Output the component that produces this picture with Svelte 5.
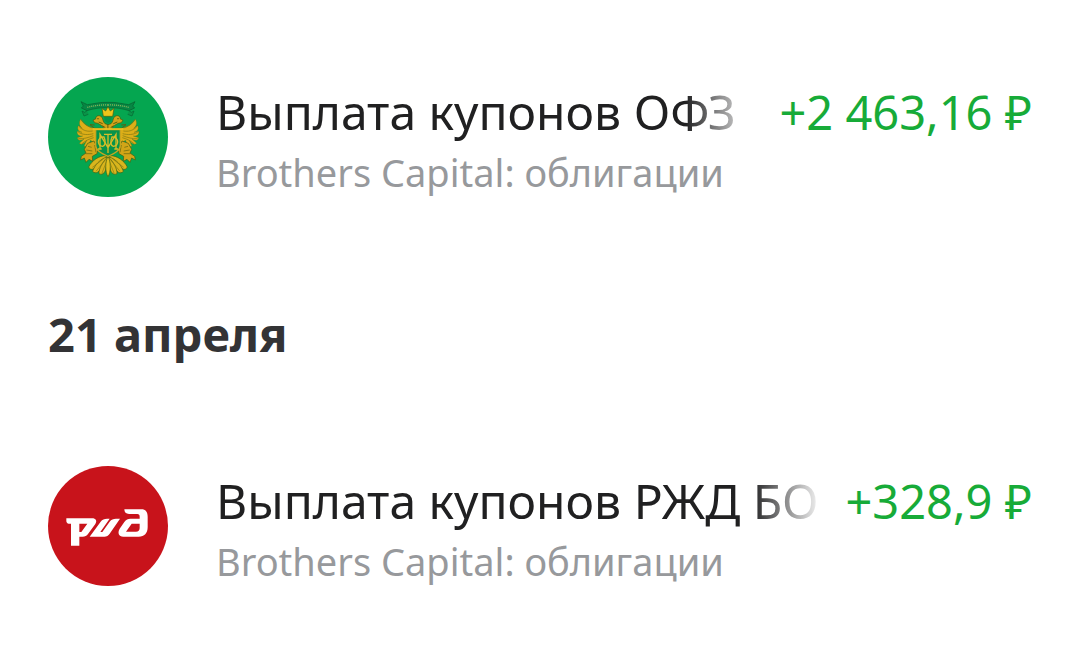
<script>
  const groups = [
    {
      date: null,
      items: [
        { logo: 'treasury', title: 'Выплата купонов ОФЗ', account: 'Brothers Capital: облигации', amount: '+2 463,16 ₽' }
      ]
    },
    {
      date: '21 апреля',
      items: [
        { logo: 'railways', title: 'Выплата купонов РЖД БО', account: 'Brothers Capital: облигации', amount: '+328,9 ₽' }
      ]
    }
  ];
</script>

{#snippet crestHalf()}
  <!-- ribbon -->
  <path d="M204 96C180 95 158 101 142 103L123 94L130 107L124 113L141 121C160 115 182 111 204 112" fill="#078744" stroke="#075f2e" stroke-width="2" />
  <path d="M141 121L134 126L126 122L132 137L145 132" fill="#0a9448" stroke="#086534" stroke-width="2" />
  <path d="M142 111C162 106 182 103 204 104" fill="none" stroke="#91b65b" stroke-width="4" stroke-dasharray="3 3" />
  <!-- wing -->
  <g stroke="#6b6a10" stroke-width="1" fill="#dcae18">
    <path d="M162 174C145 171 130 161 122 147C115 158 119 168 127 174L115 166C110 177 117 184 126 186L112 183C109 193 118 198 128 197L112 202C114 212 124 211 132 206L118 219C127 226 136 217 140 210L132 228C144 230 149 218 151 210L166 218L172 178Z" />
    <path d="M124 148C132 160 142 168 155 172M118 170C132 182 142 184 158 182M115 186C130 194 144 194 160 190M115 205C132 206 144 202 160 196M125 221C138 210 147 206 161 202" fill="none" stroke="#7d7512" stroke-width="2" />
  </g>
  <!-- head and neck -->
  <path d="M194 180C189 164 180 164 174 159L164 157L159 149L167 146C166 136 179 132 186 141C190 148 188 153 195 160L204 163V180Z" fill="#d4a419" stroke="#4a570e" stroke-width="2" />
  <path d="M176 155L188 160M187 166L196 172M164 164L150 163L164 174L183 174" fill="none" stroke="#605d0d" stroke-width="3" />
  <circle cx="174" cy="145" r="2" fill="#394d0c" />
  <!-- leg and claw -->
  <path d="M162 212L143 219L133 237L138 248L124 258L122 269L133 263L138 276L147 267L158 273L157 258L171 250L174 236Z" fill="#d2a518" stroke="#465b10" stroke-width="2" />
  <path d="M144 228L155 231M139 239L157 242M137 250L157 250M164 224L168 246" fill="none" stroke="#5f650f" stroke-width="2" />
  <!-- tail -->
  <g fill="#d9b51d" stroke="#455d10" stroke-width="2">
    <path d="M198 256C178 255 155 271 146 290C150 301 163 298 167 289L200 266Z" />
    <path d="M200 260C181 266 163 285 158 303C167 313 179 304 182 293L202 269Z" />
    <path d="M202 261C188 274 176 295 177 310C190 316 197 304 198 291L204 265Z" />
  </g>
  <path d="M157 291L190 266M168 303L197 268M186 308L201 270" fill="none" stroke="#8a7b12" stroke-width="2" />
{/snippet}

{#snippet treasuryLogo()}
  <svg class="logo" viewBox="24 20 360 360" aria-hidden="true">
    <circle cx="204" cy="200" r="180" fill="#05a650" />
    {@render crestHalf()}
    <g transform="matrix(-1 0 0 1 408 0)">{@render crestHalf()}</g>
    <path d="M204 258C195 274 195 305 204 319C213 305 213 274 204 258Z" fill="#e2c021" stroke="#47600f" stroke-width="2" />
    <path d="M190 138L186 114L197 122L204 109L211 122L222 114L218 138Z" fill="#efc51a" stroke="#4e5b0d" stroke-width="2" />
    <path d="M192 140H216L213 153L204 159L195 153Z" fill="#07934a" />
    <path d="M167 178H241V223C241 241 222 250 204 258C186 250 167 241 167 223Z" fill="#07934a" stroke="#c9a520" stroke-width="4" />
    <path d="M158 176H250" stroke="#edc323" stroke-width="5" />
    <g fill="none" stroke="#d6bd28" stroke-width="4">
      <path d="M174 236H185M180 234V192L204 232L228 192V234M223 236H234M192 192H216M204 192V248" />
      <path d="M192 200C170 198 170 228 188 228C196 226 198 214 192 200ZM216 200C238 198 238 228 220 228C212 226 210 214 216 200Z" />
    </g>
  </svg>
{/snippet}

{#snippet railwaysLogo()}
  <svg class="logo" viewBox="24 22 360 360" aria-hidden="true">
    <circle cx="204" cy="202" r="180" fill="#c8131b" />
    <path fill="#fff" fill-rule="evenodd" d="M79 179H156C168 179 172 187 166 196L144 226C140 232 135 234 128 234H118V261H93V195H86C82 195 79 191 79 187ZM118 195V220H124L142 195Z" />
    <path fill="#fff" d="M149 234L182 189C187 182 193 180 201 180H209L181 220H187L209 189C214 182 220 180 228 180H240L209 225C205 231 200 234 193 234Z" />
    <path fill="#fff" fill-rule="evenodd" d="M253 152H304C317 152 323 160 323 174V205C323 224 313 234 296 234H250C236 234 232 222 239 210L253 190C258 182 264 180 271 180H299V174C299 169 297 166 292 166H267C258 166 253 161 253 152ZM275 195L258 219H288C295 219 299 215 299 208V195Z" />
  </svg>
{/snippet}

<main>
  {#each groups as group}
    <section>
      {#if group.date}<h2>{group.date}</h2>{/if}
      <ul>
        {#each group.items as item}
          <li>
            {#if item.logo === 'treasury'}{@render treasuryLogo()}{:else}{@render railwaysLogo()}{/if}
            <div class="details">
              <div class="headline">
                <span class="title">{item.title}</span>
                <span class="amount">{item.amount}</span>
              </div>
              <div class="account">{item.account}</div>
            </div>
          </li>
        {/each}
      </ul>
    </section>
  {/each}
</main>

<style>
  :global(body) {
    margin: 0;
    background: #fff;
  }

  main {
    padding: 77px 48px 75px;
    display: flex;
    flex-direction: column;
    gap: 104px;
    font-family: 'Noto Sans', sans-serif;
  }

  h2 {
    margin: 0 0 99px;
    font-size: 47px;
    font-weight: 700;
    line-height: 66px;
    color: #333335;
  }

  ul {
    margin: 0;
    padding: 0;
    list-style: none;
  }

  li {
    display: flex;
    align-items: center;
    gap: 48px;
  }

  .logo {
    flex: none;
    width: 120px;
    height: 120px;
  }

  .details {
    flex: 1;
    min-width: 0;
  }

  .headline {
    display: flex;
    gap: 22px;
    font-size: 48px;
    line-height: 70px;
  }

  .title {
    flex: 1;
    min-width: 0;
    overflow: hidden;
    white-space: nowrap;
    font-weight: 450;
    color: #202021;
    mask-image: linear-gradient(to left, transparent, #000 72px);
  }

  .amount {
    flex: none;
    white-space: nowrap;
    font-size: 47px;
    font-weight: 450;
    color: #17ab38;
  }

  .account {
    font-size: 38px;
    line-height: 50px;
    color: #97999c;
    overflow: hidden;
    white-space: nowrap;
    text-overflow: ellipsis;
  }
</style>
